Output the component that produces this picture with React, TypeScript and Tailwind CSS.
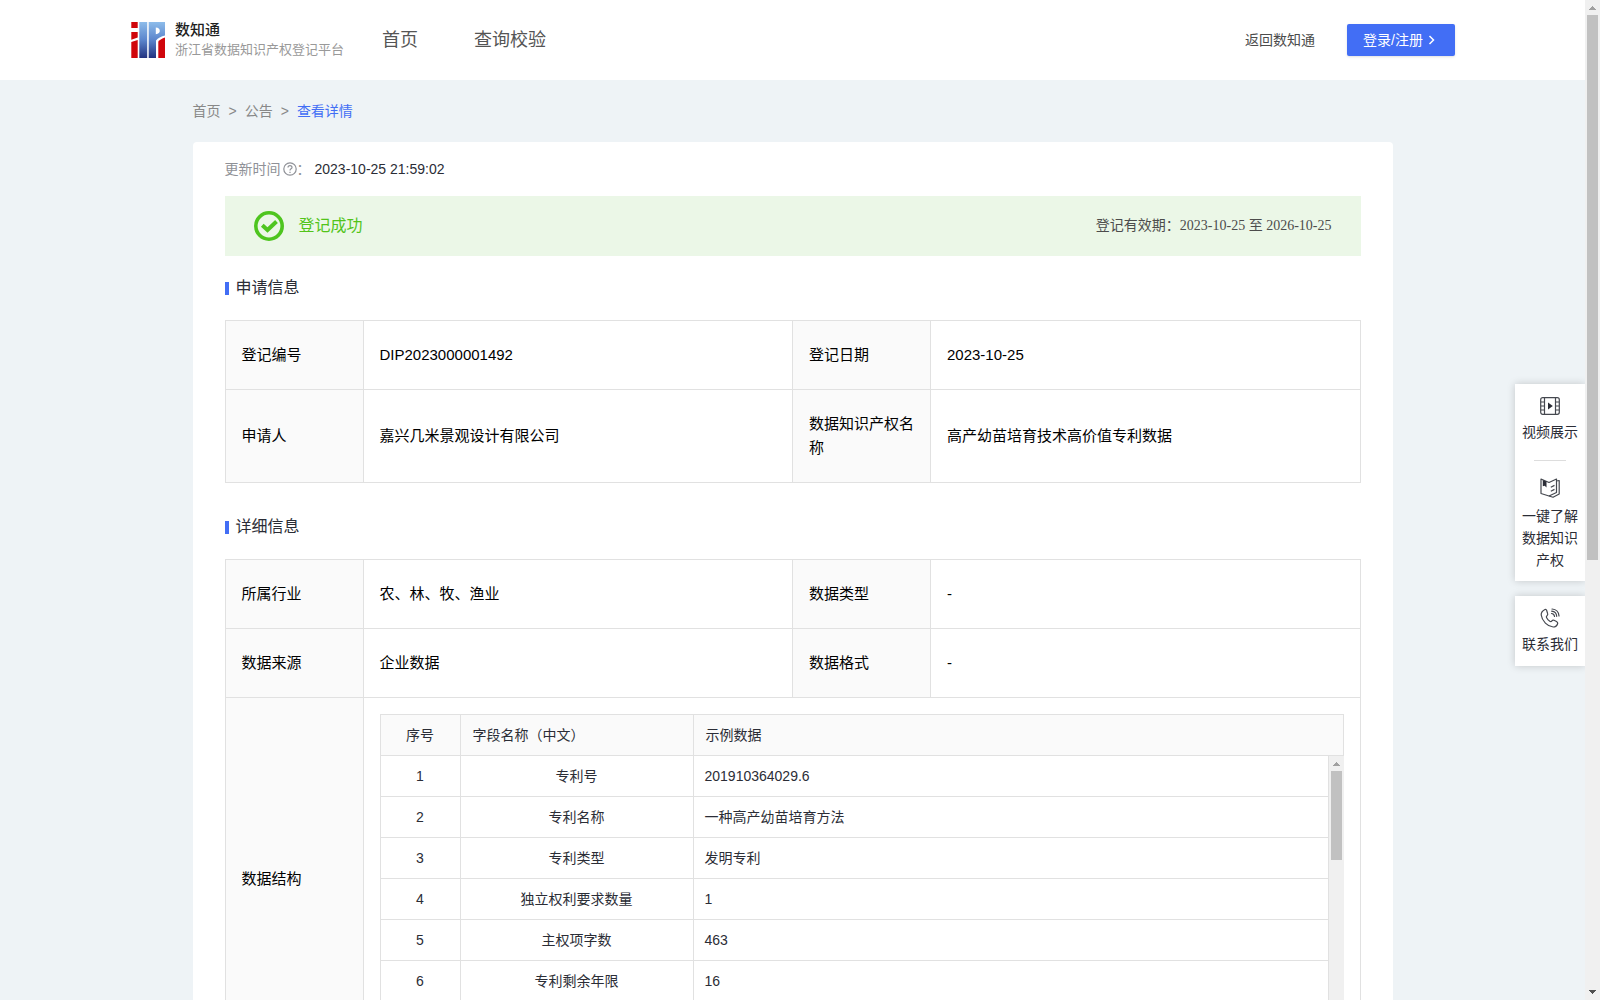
import type { ReactNode } from "react";

type Field = { label: string; value: string };

const applyRows: [Field, Field][] = [
  [
    { label: "登记编号", value: "DIP2023000001492" },
    { label: "登记日期", value: "2023-10-25" },
  ],
  [
    { label: "申请人", value: "嘉兴几米景观设计有限公司" },
    { label: "数据知识产权名称", value: "高产幼苗培育技术高价值专利数据" },
  ],
];

const detailRows: [Field, Field][] = [
  [
    { label: "所属行业", value: "农、林、牧、渔业" },
    { label: "数据类型", value: "-" },
  ],
  [
    { label: "数据来源", value: "企业数据" },
    { label: "数据格式", value: "-" },
  ],
];

const structure = [
  { name: "专利号", sample: "201910364029.6" },
  { name: "专利名称", sample: "一种高产幼苗培育方法" },
  { name: "专利类型", sample: "发明专利" },
  { name: "独立权利要求数量", sample: "1" },
  { name: "主权项字数", sample: "463" },
  { name: "专利剩余年限", sample: "16" },
];

function Logo() {
  return (
    <svg width="36" height="36" viewBox="0 0 36 36" aria-hidden="true">
      <defs>
        <linearGradient id="logo-blue" x1="0" y1="0" x2="0" y2="1">
          <stop offset="0" stopColor="#8dbcea" />
          <stop offset="0.5" stopColor="#5b85cc" />
          <stop offset="1" stopColor="#22327f" />
        </linearGradient>
      </defs>
      <path fill="#d0060c" d="M1.300 0h6.400v6H1.300zM1.300 10h6.400v5.500l-6.400 2.200zM1.300 20l6.400-2V36H1.300z" />
      <path
        fill="url(#logo-blue)"
        fillRule="evenodd"
        d="M9.300 0h7.900v36H9.300zM18.700 0H35v13.500c-4 1-7 2.500-9 5V36h-7.300zM25.800 5.500v6.800c2.800-.6 4-1.800 4-3.400 0-2-1.300-3.400-4-3.400z"
      />
      <path fill="#d0060c" d="M28.300 19.500c1.600-1.800 3.800-3.100 6.700-4V36h-6.700z" />
    </svg>
  );
}

function VideoIcon() {
  return (
    <svg width="20" height="20" viewBox="0 0 20 20" fill="none" stroke="#45484f" strokeWidth="1.200" aria-hidden="true">
      <rect x="0.700" y="1.700" width="18.600" height="16.600" rx="2" />
      <path d="M4.500 2v16M15.500 2v16M1 6h3.500M1 10h3.500M1 14h3.500M15.500 6H19M15.500 10H19M15.500 14H19" />
      <path d="M8 6.500l4.800 3.500L8 13.500z" fill="#2b2d36" stroke="none" />
    </svg>
  );
}

function BookIcon() {
  return (
    <svg width="20" height="20" viewBox="0 0 20 20" fill="none" stroke="#45484f" strokeWidth="1.200" strokeLinejoin="round" aria-hidden="true">
      <path d="M1 1l8 3.500L16.500 1v13.500L9 18 1 15.500z" />
      <path d="M16.500 3l2.700-.5v13.500L13 19.300l-4-1.300M10.800 9.200l3.700-1.800M10.800 13.200l3.700-1.800" />
      <path d="M2.800 2l3.700 1.500V9.500L4.700 7.800 2.800 8.200z" fill="#2b2d36" stroke="none" />
    </svg>
  );
}

function PhoneIcon() {
  return (
    <svg width="20" height="20" viewBox="0 0 20 20" fill="none" stroke="#45484f" strokeWidth="1.200" strokeLinecap="round" strokeLinejoin="round" aria-hidden="true">
      <path d="M5 1.500C3 2.500 1 4 1.200 7c.8 6 6.300 11.500 12 12 2.500 0 4-1.800 4.500-3.500.2-1-.4-1.500-1.200-2l-2.500-1.300c-1-.4-1.600 0-2.200.8-.6.700-1.200.800-2 .3-1.500-1-2.600-2.200-3.300-3.700-.4-.8-.2-1.300.5-1.900.8-.6 1-1.200.6-2.200L6.600 2.300c-.4-.8-.8-1.200-1.600-.8z" />
      <path d="M11.500 5.500c1.800.2 2.800 1.200 3 3M11.700 3.200c3 .3 4.800 2.200 5 5.100M12 1c4.300.3 6.700 2.800 7 7" />
    </svg>
  );
}

// Static scrollbar, fills the height of its container
function Scrollbar({ thumb, end }: { thumb: ReactNode; end?: boolean }) {
  return (
    <div className="flex w-[15px] shrink-0 flex-col items-center self-stretch bg-[#f0f0f0]" aria-hidden="true">
      <svg width="15" height="15" viewBox="0 0 15 15" shapeRendering="crispEdges">
        <path d="M4 10h7L7.500 6z" fill="#a0a0a0" />
      </svg>
      {thumb}
      {end && (
        <svg className="mt-auto" width="15" height="15" viewBox="0 0 15 15" shapeRendering="crispEdges">
          <path d="M4 5h7L7.500 9z" fill="#505050" />
        </svg>
      )}
    </div>
  );
}

function SectionTitle({ children }: { children: ReactNode }) {
  return (
    <h2 className="flex items-center gap-[7px] text-base leading-6 text-[#2b2d36]">
      <span className="h-[13px] w-1 bg-[#426ef5]" />
      {children}
    </h2>
  );
}

function InfoTable({ rows, children }: { rows: [Field, Field][]; children?: ReactNode }) {
  return (
    <table className="w-full table-fixed border-collapse text-[15px] leading-6 text-black">
      <colgroup>
        <col className="w-[138px]" />
        <col />
        <col className="w-[138px]" />
        <col />
      </colgroup>
      <tbody>
        {rows.map((row) => (
          <tr key={row[0].label}>
            {row.map((f) => (
              <FieldCells key={f.label} {...f} />
            ))}
          </tr>
        ))}
        {children}
      </tbody>
    </table>
  );
}

function FieldCells({ label, value }: Field) {
  return (
    <>
      <th scope="row" className="border border-[#e1e1e1] bg-[#fafafa] px-4 py-[22px] text-left font-normal">
        {label}
      </th>
      <td className="border border-[#e1e1e1] px-4 py-[22px]">{value}</td>
    </>
  );
}

function StructureTable() {
  return (
    <div className="flex h-[329px] flex-col text-sm leading-5 text-[#2b2d36]">
      <table className="w-full table-fixed border-collapse">
        <colgroup>
          <col className="w-20" />
          <col className="w-[233px]" />
          <col />
        </colgroup>
        <thead>
          <tr className="h-[41px] bg-[#fafafa]">
            <th className="border border-[#e1e1e1] font-normal">序号</th>
            <th className="border border-[#e1e1e1] px-3 text-left font-normal">字段名称（中文）</th>
            <th className="border border-[#e1e1e1] px-3 text-left font-normal">示例数据</th>
          </tr>
        </thead>
      </table>
      <div className="flex min-h-0 flex-1 overflow-hidden">
        <table className="min-w-0 flex-1 table-fixed border-separate border-spacing-0 self-start">
          <colgroup>
            <col className="w-[81px]" />
            <col className="w-[233px]" />
            <col />
          </colgroup>
          <tbody>
            {structure.map((row, i) => (
              <tr key={row.name} className="h-[41px]">
                <td className="border-x border-b border-[#e1e1e1] text-center">{i + 1}</td>
                <td className="border-r border-b border-[#e1e1e1] px-3 text-center">{row.name}</td>
                <td className="border-r border-b border-[#e1e1e1] px-[11px]">{row.sample}</td>
              </tr>
            ))}
          </tbody>
        </table>
        <Scrollbar thumb={<div className="h-[89px] w-[11px] bg-[#c1c1c1]" />} />
      </div>
    </div>
  );
}

function Header() {
  return (
    <header className="flex h-20 items-center bg-white px-[130px]">
      <a href="#" className="flex items-center gap-[9px]">
        <Logo />
        <span className="flex flex-col">
          <span className="text-[15px] leading-5 font-medium text-[#1f1f1f]">数知通</span>
          <span className="text-[13px] leading-5 text-[#999]">浙江省数据知识产权登记平台</span>
        </span>
      </a>
      <nav className="ml-[38px] flex gap-14 text-lg leading-6 text-[#555]">
        <a href="#">首页</a>
        <a href="#">查询校验</a>
      </nav>
      <div className="ml-auto flex items-center gap-8 text-sm">
        <a href="#" className="text-[#4c4c4c]">
          返回数知通
        </a>
        <button type="button" className="flex h-8 w-[108px] items-center gap-1 rounded-[2px] bg-[#426ef5] pl-4 text-white shadow-sm">
          登录/注册
          <svg width="10" height="10" viewBox="0 0 10 10" fill="none" stroke="currentColor" strokeWidth="1.500" aria-hidden="true">
            <path d="M2.500 1l4 4-4 4" />
          </svg>
        </button>
      </div>
    </header>
  );
}

function SideTools() {
  const item = "flex flex-col items-center px-[7px] text-center";
  return (
    <aside className="absolute top-[384px] right-0 flex w-[70px] flex-col gap-[15px] text-sm leading-[22px] text-[#2b2d36]">
      <div className="bg-white pt-3 pb-[10px] shadow-[0_0_8px_rgba(0,0,0,0.18)]">
        <a href="#" className={item}>
          <VideoIcon />
          <span className="mt-[5px]">视频展示</span>
        </a>
        <div className="mx-auto my-[17px] h-px w-8 bg-[#ddd]" />
        <a href="#" className={item}>
          <BookIcon />
          <span className="mt-[7px]">一键了解数据知识产权</span>
        </a>
      </div>
      <div className="bg-white pt-3 pb-[11px] shadow-[0_0_8px_rgba(0,0,0,0.18)]">
        <a href="#" className={item}>
          <PhoneIcon />
          <span className="mt-[5px]">联系我们</span>
        </a>
      </div>
    </aside>
  );
}

export default function App() {
  return (
    <div className="flex h-screen overflow-hidden bg-[#eef3f6] font-['Liberation_Sans','Noto_Sans_CJK_SC',sans-serif]">
      <div className="relative min-w-0 flex-1 overflow-hidden">
        <Header />
        <main className="mx-auto max-w-[1200px]">
          <nav className="flex h-[62px] items-center gap-2 text-sm text-[#888]">
            <a href="#">首页</a>
            <span>&gt;</span>
            <a href="#">公告</a>
            <span>&gt;</span>
            <a href="#" className="text-[#426ef5]">
              查看详情
            </a>
          </nav>

          <div className="rounded-sm bg-white px-8 pt-4 pb-8">
            <p className="flex h-[22px] items-center text-sm text-[#8f9197]">
              更新时间
              <svg className="ml-[2px]" width="14" height="14" viewBox="0 0 14 14" fill="none" stroke="currentColor" strokeWidth="1.200" aria-hidden="true">
                <circle cx="7" cy="7" r="6.200" />
                <path d="M5 5.600c0-2.600 4-2.600 4-.2 0 1.400-2 1.400-2 3M7 9.700v1.200" />
              </svg>
              ：<span className="ml-1 text-[#2b2d36]">2023-10-25 21:59:02</span>
            </p>

            <div className="mt-4 flex h-[60px] items-center justify-between bg-[#ebf7e7] px-[29px]">
              <div className="flex items-center gap-[15px] text-base text-[#52c41a]">
                <svg width="30" height="30" viewBox="0 0 30 30" fill="none" stroke="#4ec51f" aria-hidden="true">
                  <circle cx="15" cy="15" r="13.200" strokeWidth="3.600" />
                  <path d="M8.300 14.300l5.200 4.700 9-8.500" strokeWidth="4" />
                </svg>
                登记成功
              </div>
              <p className="font-['Liberation_Serif','Noto_Sans_CJK_SC',serif] text-sm text-[#4c4c4c]">
                登记有效期：2023-10-25 至 2026-10-25
              </p>
            </div>

            <div className="mt-5 space-y-5">
              <SectionTitle>申请信息</SectionTitle>
              <InfoTable rows={applyRows} />
            </div>

            <div className="mt-8 space-y-5">
              <SectionTitle>详细信息</SectionTitle>
              <InfoTable rows={detailRows}>
                <tr>
                  <th scope="row" className="border border-[#e1e1e1] bg-[#fafafa] px-4 text-left font-normal">
                    数据结构
                  </th>
                  <td colSpan={3} className="border border-[#e1e1e1] p-4">
                    <StructureTable />
                  </td>
                </tr>
              </InfoTable>
            </div>
          </div>
        </main>
        <SideTools />
      </div>
      <Scrollbar end thumb={<div className="h-[545px] w-[11px] bg-[#c1c1c1]" />} />
    </div>
  );
}
